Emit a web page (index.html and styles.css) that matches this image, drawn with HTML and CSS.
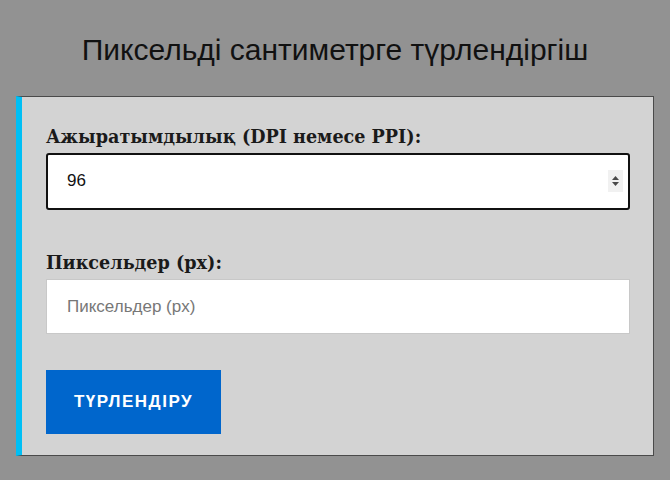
FILE: index.html
```html
<!DOCTYPE html>
<html lang="kk">
<head>
<meta charset="utf-8">
<link rel="stylesheet" href="styles.css">
</head>
<body>
<h1 class="title">Пиксельді сантиметрге түрлендіргіш</h1>
<div class="card">
  <label class="label" for="dpi">Ажыратымдылық (DPI немесе PPI):</label>
  <div class="field focused">
    <span class="value">96</span>
    <span class="spin"><svg width="15" height="22" viewBox="0 0 15 22"><rect width="15" height="22" fill="#f1f1f1"/><path d="M7.5 6 L11 10 H4 Z M7.5 16 L11 12 H4 Z" fill="#4a4a4a"/></svg></span>
  </div>
  <label class="label second" for="px">Пиксельдер (px):</label>
  <div class="field plain"><span class="placeholder">Пиксельдер (px)</span></div>
  <button class="btn">ТҮРЛЕНДІРУ</button>
</div>
</body>
</html>
```
FILE: styles.css
```css
html, body { margin: 0; padding: 0; }
body {
  background: #929292;
  font-family: "Liberation Sans", Arial, sans-serif;
  padding: 0 16px;
  height: 480px;
  box-sizing: border-box;
  overflow: hidden;
}
.title {
  margin: 0;
  padding-top: 34px;
  height: 96px;
  box-sizing: border-box;
  text-align: center;
  font-weight: normal;
  font-size: 30px;
  line-height: 32px;
  color: #111;
}
.card {
  background: #d3d3d3;
  border: 1px solid #4a4a4a;
  border-left: 6px solid #00bff5;
  padding: 26px 23px 21px 24px;
  display: flex;
  flex-direction: column;
  align-items: flex-start;
  height: 360px;
  box-sizing: border-box;
}
.label {
  font-family: "DejaVu Serif", "Liberation Serif", serif;
  font-weight: bold;
  font-size: 17.6px;
  line-height: 24px;
  color: #1a1a1a;
  margin-top: 2px;
  margin-bottom: 4px;
}
.label.second { margin-top: 41px; margin-bottom: 4px; }
.field {
  align-self: stretch;
  background: #fff;
  display: flex;
  align-items: center;
  justify-content: space-between;
  box-sizing: border-box;
  font-size: 17px;
  color: #111;
}
.field.focused {
  height: 57px;
  border: 2px solid #111;
  border-radius: 3px;
  padding: 0 5px 0 19px;
}
.field.plain {
  height: 56px;
  border: 1px solid #c8c8c8;
  padding: 0 20px;
}
.placeholder { color: #777; }
.spin { display: flex; align-items: center; }
.btn {
  margin-top: 36px;
  width: 175px;
  height: 64px;
  border: none;
  background: #0066cc;
  color: #fff;
  font-family: "Liberation Sans", Arial, sans-serif;
  font-weight: bold;
  font-size: 17px;
  letter-spacing: 1.5px;
  padding: 0;
}
```
